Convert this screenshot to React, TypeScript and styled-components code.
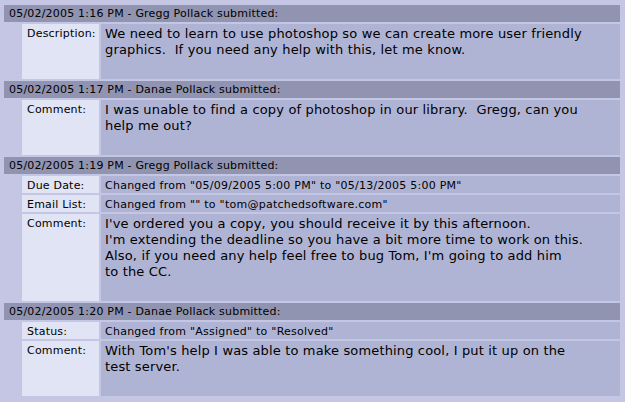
import React from "react";
import styled, { createGlobalStyle } from "styled-components";

const GlobalStyle = createGlobalStyle`
  html, body { margin: 0; padding: 0; background: #c4c6e4; }
  body { font-family: "DejaVu Sans", Verdana, sans-serif; color: #000; }
`;

const Log = styled.div`
  display: grid;
  grid-template-columns: 16px 77px 1fr;
  gap: 2px;
  padding: 5px 5px 6px 4px;
  width: 625px;
  box-sizing: border-box;
`;

const Header = styled.div`
  grid-column: 1 / -1;
  background: #9194b0;
  height: 17px;
  line-height: 17px;
  padding: 0 5px;
  font-size: 11px;
  letter-spacing: 0.2px;
  white-space: nowrap;
`;

const Label = styled.div`
  grid-column: 2;
  background: #e0e4f4;
  font-size: 11px;
  letter-spacing: 0.2px;
  line-height: 13px;
  padding: 3px 4px 1px 5px;
  white-space: nowrap;
`;

const Value = styled.div<{ $big?: boolean }>`
  grid-column: 3;
  background: #b0b4d4;
  font-size: ${(p) => (p.$big ? "13px" : "11px")};
  letter-spacing: ${(p) => (p.$big ? "0.15px" : "0.25px")};
  line-height: ${(p) => (p.$big ? "16px" : "13px")};
  padding: ${(p) => (p.$big ? "2px 4px 21px 4px" : "3px 4px 1px 4px")};
  white-space: nowrap;
`;

type Field = { label: string; value: string[]; big?: boolean };
type Entry = { header: string; fields: Field[] };

const entries: Entry[] = [
  {
    header: "05/02/2005 1:16 PM - Gregg Pollack submitted:",
    fields: [
      {
        label: "Description:",
        big: true,
        value: [
          "We need to learn to use photoshop so we can create more user friendly",
          "graphics.\u00a0 If you need any help with this, let me know.",
        ],
      },
    ],
  },
  {
    header: "05/02/2005 1:17 PM - Danae Pollack submitted:",
    fields: [
      {
        label: "Comment:",
        big: true,
        value: [
          "I was unable to find a copy of photoshop in our library.\u00a0 Gregg, can you",
          "help me out?",
        ],
      },
    ],
  },
  {
    header: "05/02/2005 1:19 PM - Gregg Pollack submitted:",
    fields: [
      { label: "Due Date:", value: ['Changed from "05/09/2005 5:00 PM" to "05/13/2005 5:00 PM"'] },
      { label: "Email List:", value: ['Changed from "" to "tom@patchedsoftware.com"'] },
      {
        label: "Comment:",
        big: true,
        value: [
          "I've ordered you a copy, you should receive it by this afternoon.",
          "I'm extending the deadline so you have a bit more time to work on this.",
          "Also, if you need any help feel free to bug Tom, I'm going to add him",
          "to the CC.",
        ],
      },
    ],
  },
  {
    header: "05/02/2005 1:20 PM - Danae Pollack submitted:",
    fields: [
      { label: "Status:", value: ['Changed from "Assigned" to "Resolved"'] },
      {
        label: "Comment:",
        big: true,
        value: [
          "With Tom's help I was able to make something cool, I put it up on the",
          "test server.",
        ],
      },
    ],
  },
];

export default function App() {
  return (
    <>
      <GlobalStyle />
      <Log>
        {entries.map((e, i) => (
          <React.Fragment key={i}>
            <Header>{e.header}</Header>
            {e.fields.map((f, j) => (
              <React.Fragment key={j}>
                <Label>{f.label}</Label>
                <Value $big={f.big}>
                  {f.value.map((line, k) => (
                    <div key={k}>{line}</div>
                  ))}
                </Value>
              </React.Fragment>
            ))}
          </React.Fragment>
        ))}
      </Log>
    </>
  );
}
